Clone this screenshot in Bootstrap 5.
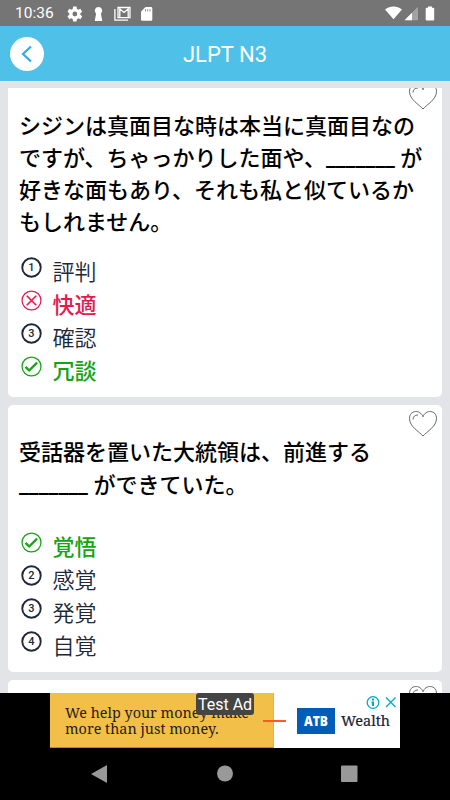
<!DOCTYPE html>
<html lang="ja">
<head>
<meta charset="utf-8">
<meta name="viewport" content="width=device-width, initial-scale=1">
<title>JLPT N3</title>
<link href="https://cdn.jsdelivr.net/npm/bootstrap@5.3.0/dist/css/bootstrap.min.css" rel="stylesheet">
<style>
body{font-family:Roboto,"Noto Sans CJK JP",sans-serif;background:#e3e4e8;height:800px}
svg{display:block;flex:none}
.status-strip{height:26px;background:#757575;font-size:15.5px;padding:1px 15px 0}
.clock{width:50px}
.title-bar{height:55px;background:#4fc0e8;padding:0 10px}
.title-text{font-size:22px;padding-top:2px}
.back-btn{width:34px;height:34px}
.edge{height:1px;background:#d5edf7}
.feed{height:605px;margin:6px 8px 0;gap:8px}
.question{border:0;border-radius:5px;flex:none}
.question-a{height:309px;border-radius:0 0 5px 5px;padding:22.5px 11px 0}
.question-b{height:267px;padding:32.3px 11px 0}
.question-c{height:60px}
.prompt{font-size:22px;line-height:32.2px;font-weight:500;color:#000;white-space:nowrap}
.question-a .prompt{height:145px}
.question-b .prompt{height:93.5px}
.choice{height:33px;font-size:22px;line-height:33px;font-weight:350;color:#202838;gap:10.500px;padding-left:2px}
.choice svg{margin-top:-9px}
.wrong{color:#e51b4f;font-weight:500}
.right{color:#16a316;font-weight:500}
.fav{right:4px;top:5px}
.question-a .fav{top:-5px}
.promo{width:350px;height:55px;margin-left:50px}
.promo-copy{width:224px;background:#f2bf49;border-right:1px solid #f2b705;border-bottom:1px solid #b78a2b;color:#272014;font:14.4px/16px "Noto Serif","Liberation Serif",serif;padding:12px 0 0 15px;white-space:nowrap}
.promo-brand{background:#fff}
.promo-tag{left:146px;top:0;width:58px;height:22px;border-radius:3px;background:#444;font-size:16px;line-height:24px;color:#fff;text-align:center;white-space:nowrap}
</style>
<script src="https://cdn.jsdelivr.net/npm/bootstrap@5.3.0/dist/js/bootstrap.bundle.min.js"></script>
</head>
<body class="overflow-hidden d-flex flex-column">
<svg width="0" height="0" class="position-absolute">
<defs>
<symbol id="heart" viewBox="0 0 30 28"><path d="M15 26C11 21.500 1.500 16.500 1.500 8.500C1.500-.2 12.500-.8 15 6.800C17.500-.8 28.500-.2 28.500 8.500C28.500 16.500 19 21.500 15 26ZM5 9.500Q5.200 5 10 5" fill="none" stroke="#444" stroke-width=".8"/></symbol>
<symbol id="check" viewBox="0 0 20 20"><circle cx="10" cy="10" r="9" fill="none" stroke="currentColor" stroke-width="1.200"/><path d="M4.300 10.300l3.500 3.500 7.500-7.500" fill="none" stroke="currentColor" stroke-width="2.200"/></symbol>
<symbol id="ring" viewBox="0 0 20 20"><circle cx="10" cy="10" r="8.800" fill="none" stroke="#202838" stroke-width="1.800"/></symbol>
</defs>
</svg>

<div class="status-strip d-flex align-items-center text-white">
  <span class="clock">10:36</span>
  <svg width="18" height="18" viewBox="1.500 1.500 21 21" fill="#fff"><path d="M19.400 13a7.800 7.800 0 0 0 0-2l2.100-1.600-2-3.500-2.500 1a7 7 0 0 0-1.700-1L15 3.200h-4l-.4 2.700a7 7 0 0 0-1.700 1l-2.500-1-2 3.500L6.500 11a7.800 7.800 0 0 0 0 2l-2.100 1.600 2 3.500 2.500-1a7 7 0 0 0 1.700 1l.4 2.700h4l.4-2.700a7 7 0 0 0 1.700-1l2.500 1 2-3.500zM13 14.800a2.800 2.800 0 1 1 0-5.600 2.800 2.800 0 0 1 0 5.600z"/></svg>
  <svg class="ms-2" width="15" height="16" viewBox="0 0 16 16" fill="#fff"><path d="M8 .5a4 4 0 0 1 3 6.700H10.500L12 15.500H4L5.500 7.200H5A4 4 0 0 1 8 .5z"/></svg>
  <svg class="ms-2" width="17" height="16" viewBox="0 0 17 16"><path d="M.9 3v11.200H14" fill="none" stroke="#fff" stroke-width="1.300"/><path d="M4 1.500h12v10.200H4zM5.800 11V3L10 6.500 14.200 3v8" fill="none" stroke="#fff" stroke-width="1.300"/></svg>
  <svg width="14" height="16" viewBox="0 0 14 16" class="ms-2"><path d="M6.500 1H12q1.300 0 1.300 1.300V13.500q0 1.300-1.300 1.300H3.300Q2 14.800 2 13.500V5.500z" fill="#fff"/><path d="M6.500 3v2.500M8.700 3v2.500M11 3v2.500" stroke="#999" stroke-width="1"/></svg>
  <svg class="ms-auto" width="53" height="16" viewBox="0 0 53 16"><path d="M3 3.600C8-.4 15-.4 20 3.600L11.500 13.300z" fill="#fff"/><path d="M22.500 14.200L36 .8v13.400z" fill="#a3a3a3"/><path d="M22.500 14.200l7.500-7.500v7.500z" fill="#fff"/><path d="M46 .5h4v1.300h1.200q1 0 1 1v10.700q0 1-1 1h-6.500q-1 0-1-1V2.800q0-1 1-1h1.300z" fill="#fff"/></svg>
</div>

<header class="title-bar d-flex align-items-center text-white">
  <div class="back-btn rounded-circle bg-white d-flex align-items-center justify-content-center">
    <svg width="16" height="18" viewBox="0 0 16 18"><path d="M12 1.500L4 9l8 7.500" fill="none" stroke="#2caee0" stroke-width="2.200"/></svg>
  </div>
  <div class="title-text flex-grow-1 text-center">JLPT N3</div>
  <div class="back-btn"></div>
</header>
<div class="edge"></div>

<main class="feed d-flex flex-column overflow-hidden">
  <section class="card question question-a position-relative overflow-hidden">
    <svg class="fav position-absolute" width="30" height="28"><use href="#heart"/></svg>
    <div class="prompt">シジンは真面目な時は本当に真面目なの<br>ですが、ちゃっかりした面や、_______ が<br>好きな面もあり、それも私と似ているか<br>もしれません。</div>
    <div class="choice d-flex align-items-center"><svg width="21" height="21" viewBox="0 0 20 20"><use href="#ring"/><text x="10" y="13.700" text-anchor="middle" font-size="10.500" font-weight="500" fill="#202838">1</text></svg><span>評判</span></div>
    <div class="choice wrong d-flex align-items-center"><svg width="21" height="21" viewBox="0 0 20 20"><circle cx="10" cy="10" r="9" fill="none" stroke="currentColor" stroke-width="1.200"/><path d="M5.500 5.500l9 9m0-9l-9 9" stroke="currentColor" stroke-width="1.600"/></svg><span>快適</span></div>
    <div class="choice d-flex align-items-center"><svg width="21" height="21" viewBox="0 0 20 20"><use href="#ring"/><text x="10" y="13.700" text-anchor="middle" font-size="10.500" font-weight="500" fill="#202838">3</text></svg><span>確認</span></div>
    <div class="choice right d-flex align-items-center"><svg width="21" height="21"><use href="#check"/></svg><span>冗談</span></div>
  </section>

  <section class="card question question-b position-relative">
    <svg class="fav position-absolute" width="30" height="28"><use href="#heart"/></svg>
    <div class="prompt">受話器を置いた大統領は、前進する<br>_______ ができていた。</div>
    <div class="choice right d-flex align-items-center"><svg width="21" height="21"><use href="#check"/></svg><span>覚悟</span></div>
    <div class="choice d-flex align-items-center"><svg width="21" height="21" viewBox="0 0 20 20"><use href="#ring"/><text x="10" y="13.700" text-anchor="middle" font-size="10.500" font-weight="500" fill="#202838">2</text></svg><span>感覚</span></div>
    <div class="choice d-flex align-items-center"><svg width="21" height="21" viewBox="0 0 20 20"><use href="#ring"/><text x="10" y="13.700" text-anchor="middle" font-size="10.500" font-weight="500" fill="#202838">3</text></svg><span>発覚</span></div>
    <div class="choice d-flex align-items-center"><svg width="21" height="21" viewBox="0 0 20 20"><use href="#ring"/><text x="10" y="13.700" text-anchor="middle" font-size="10.500" font-weight="500" fill="#202838">4</text></svg><span>自覚</span></div>
  </section>

  <section class="card question question-c position-relative">
    <svg class="fav position-absolute" width="30" height="28"><use href="#heart"/></svg>
  </section>
</main>

<footer class="bg-black flex-grow-1">
  <div class="promo d-flex position-relative">
    <div class="promo-copy">We help your money make<br>more than just money.</div>
    <div class="promo-brand flex-grow-1"></div>
    <svg class="position-absolute top-0 start-0" width="350" height="55">
      <path d="M213 28h23" stroke="#ff5a1f" stroke-width="2"/>
      <rect x="247" y="15" width="38" height="26" fill="#005eb8"/>
      <text x="254" y="32.500" textLength="24" lengthAdjust="spacingAndGlyphs" font-family="Open Sans" font-weight="800" font-size="14.500" fill="#fff">ATB</text>
      <text x="291" y="33" textLength="49" lengthAdjust="spacingAndGlyphs" font-family="Noto Serif,Liberation Serif,serif" font-size="15" fill="#1c1c3a" stroke="#1c1c3a" stroke-width=".2">Wealth</text>
      <g fill="none" stroke="#00a9d0" stroke-width="1.300"><circle cx="323" cy="9.500" r="5.800"/><path d="M336 4.500l9.500 9.500m0-9.500L336 14"/></g>
      <path d="M322 5.500h2v2h-2zM321.500 8.500h2.500v4.500h-2z" fill="#00a9d0"/>
    </svg>
    <div class="promo-tag position-absolute">Test Ad</div>
  </div>
  <svg width="450" height="52" viewBox="0 0 450 52" fill="#999"><path d="M107 17v18L91 26z"/><circle cx="225" cy="25.500" r="8"/><rect x="341" y="17.500" width="16.500" height="16.500" rx="1"/></svg>
</footer>
</body>
</html>
